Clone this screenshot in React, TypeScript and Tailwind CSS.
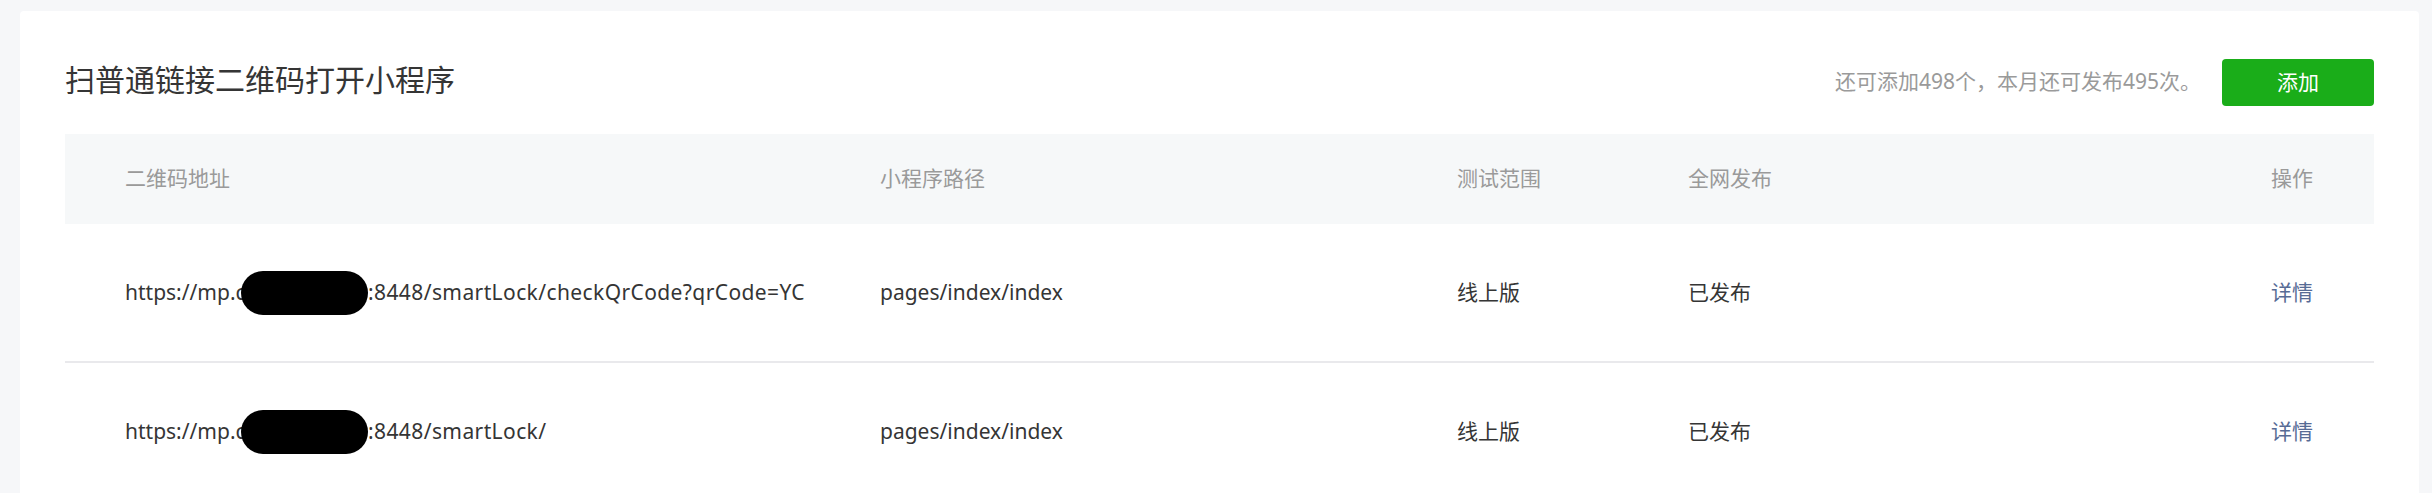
import React from "react";

const rows = [
  { rest: ":8448/smartLock/checkQrCode?qrCode=YC", path: "pages/index/index", scope: "线上版", status: "已发布" },
  { rest: ":8448/smartLock/", path: "pages/index/index", scope: "线上版", status: "已发布" },
];

export default function App() {
  return (
    <div
      className="h-[493px] overflow-hidden bg-[#f6f7f9] pt-[11px] pl-[20px] pr-[13px]"
      style={{ fontFamily: '"Noto Sans", "Noto Sans CJK SC", sans-serif' }}
    >
      <div className="bg-white rounded-[4px] px-[45px] pb-[40px] min-h-[600px]">
        <div className="flex items-center justify-between pt-[36px] pb-[17px] h-[123px]">
          <h1 className="text-[30px] leading-[40px] text-[#353535] font-normal -mt-[4px]">扫普通链接二维码打开小程序</h1>
          <div className="flex items-center">
            <span className="text-[21px] text-[#9a9a9a] mr-[21px]">还可添加498个，本月还可发布495次。</span>
            <button className="w-[152px] h-[47px] rounded-[4px] bg-[#1aad19] text-white text-[21px] leading-none">添加</button>
          </div>
        </div>
        <div className="grid grid-cols-[755px_577px_231px_1fr_auto] h-[90px] items-center bg-[#f6f8f9] text-[21px] text-[#9a9a9a]">
          <div className="pl-[60px]">二维码地址</div>
          <div className="pl-[60px]">小程序路径</div>
          <div className="pl-[60px]">测试范围</div>
          <div className="pl-[60px]">全网发布</div>
          <div className="pr-[61px] text-right">操作</div>
        </div>
        {rows.map((r, i) => (
          <div
            key={i}
            className="grid grid-cols-[755px_577px_231px_1fr_auto] h-[139px] items-center border-b-2 border-[#e9e9ec] text-[21px] text-[#353535]"
          >
            <div className="pl-[60px] whitespace-nowrap">
              <span className="relative inline-flex items-center">
                <span className="inline-block w-[243px] overflow-hidden">https://mp.c</span>
                <span className="tracking-[0.4px]">{r.rest}</span>
                <span className="absolute left-[116px] top-1/2 -translate-y-1/2 w-[127px] h-[44px] rounded-[22px] bg-black" />
              </span>
            </div>
            <div className="pl-[60px]">{r.path}</div>
            <div className="pl-[60px]">{r.scope}</div>
            <div className="pl-[60px]">{r.status}</div>
            <div className="pr-[61px] text-right text-[#576b95]">详情</div>
          </div>
        ))}
      </div>
    </div>
  );
}
